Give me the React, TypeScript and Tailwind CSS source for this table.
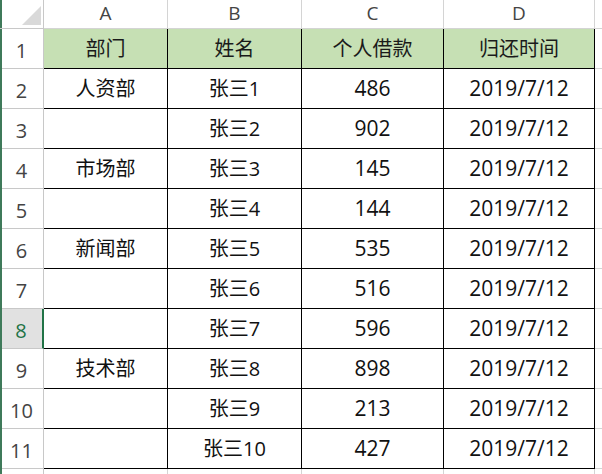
import React from 'react';

const rows = [
  { dept: '人资部', name: '张三1', amount: '486' },
  { dept: '', name: '张三2', amount: '902' },
  { dept: '市场部', name: '张三3', amount: '145' },
  { dept: '', name: '张三4', amount: '144' },
  { dept: '新闻部', name: '张三5', amount: '535' },
  { dept: '', name: '张三6', amount: '516' },
  { dept: '', name: '张三7', amount: '596' },
  { dept: '技术部', name: '张三8', amount: '898' },
  { dept: '', name: '张三9', amount: '213' },
  { dept: '', name: '张三10', amount: '427' },
];

const cellFont = { fontFamily: '"Open Sans", "Noto Sans CJK SC", sans-serif' };
const headFont = { fontFamily: '"Open Sans", "Noto Sans", sans-serif' };

export default function App() {
  return (
    <div className="w-[602px] h-[474px] overflow-hidden bg-white relative">
      {/* left window edge */}
      <div className="absolute left-0 top-0 bottom-0 w-[2px] bg-[#3f7a5a]" />
      <div
        className="grid grid-cols-[44px_124px_134px_142px_151px_7px] grid-rows-[29px_repeat(11,40px)_5px] text-[#111]"
        style={cellFont}
      >
        {/* corner */}
        <div className="relative border-r border-b border-[#c8c8c8]">
          <svg width="20" height="20" viewBox="0 0 20 20" className="absolute left-[21px] top-[6px]">
            <polygon points="20,0 20,19 1,19" fill="#d9d9d9" />
          </svg>
        </div>
        {['A', 'B', 'C', 'D'].map((c) => (
          <div
            key={c}
            className="flex items-center justify-center text-[19px] text-[#444] border-r border-b border-[#d4d4d4] pb-[1px]"
            style={headFont}
          >
            {c}
          </div>
        ))}
        <div className="border-b border-[#d4d4d4]" />

        {/* row 1 header */}
        <div className="flex items-center justify-center text-[20px] text-[#444] border-r border-b border-[#c8c8c8] pt-[4px]" style={headFont}>
          1
        </div>
        {['部门', '姓名', '个人借款', '归还时间'].map((t) => (
          <div
            key={t}
            className="flex items-center justify-center bg-[#c6e0b4] text-[20px] text-[#1a1a1a] border-r border-b border-black"
          >
            {t}
          </div>
        ))}
        <div className="border-b border-[#d4d4d4]" />

        {rows.map((r, i) => {
          const n = i + 2;
          const sel = n === 8;
          return (
            <React.Fragment key={n}>
              <div
                className={`flex items-center justify-center text-[20px] border-b pt-[4px] ${
                  sel
                    ? 'bg-[#e1e1e1] text-[#217346] border-r-2 border-r-[#217346] border-b-[#c8c8c8]'
                    : 'text-[#444] border-r border-[#c8c8c8]'
                }`}
                style={headFont}
              >
                {n}
              </div>
              <div className="flex items-center justify-center text-[20px] border-r border-b border-black">{r.dept}</div>
              <div className="flex items-center justify-center text-[20px] border-r border-b border-black">{r.name}</div>
              <div className="flex items-center justify-center text-[21px] border-r border-b border-black">{r.amount}</div>
              <div className="flex items-center justify-center text-[21px] border-r border-b border-black">2019/7/12</div>
              <div className="border-b border-[#d4d4d4]" />
            </React.Fragment>
          );
        })}

        <div className="border-r border-[#c8c8c8]" />
        <div className="border-r border-[#d4d4d4]" />
        <div className="border-r border-[#d4d4d4]" />
        <div className="border-r border-[#d4d4d4]" />
        <div className="border-r border-[#d4d4d4]" />
        <div />
      </div>
    </div>
  );
}
